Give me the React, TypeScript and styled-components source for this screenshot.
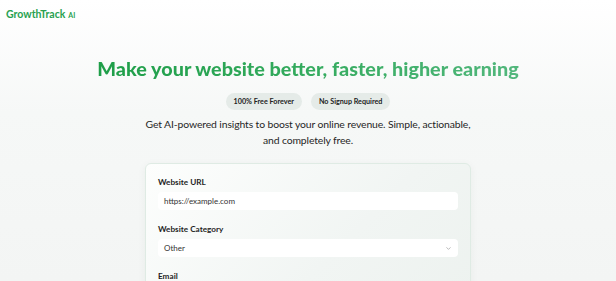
import React from 'react';
import styled, { createGlobalStyle } from 'styled-components';

const GlobalStyle = createGlobalStyle`
  html, body {
    margin: 0;
    padding: 0;
  }
  body {
    font-family: Lato, "Open Sans", sans-serif;
    background: linear-gradient(180deg, #ffffff 0%, #f6f8f7 40%, #f3f5f4 100%);
    min-height: 100vh;
    color: #222;
  }
`;

const Page = styled.div`
  width: 616px;
  height: 281px;
  overflow: hidden;
`;

const Header = styled.header`
  display: flex;
  align-items: baseline;
  padding: 8px 6px 0;
  height: 22px;
`;

const Logo = styled.span`
  font-size: 10.5px;
  font-weight: 700;
  color: #27a150;
`;

const LogoTag = styled.span`
  font-size: 7px;
  font-weight: 700;
  color: #27a150;
  margin-left: 3px;
`;

const Hero = styled.section`
  display: flex;
  flex-direction: column;
  align-items: center;
  padding-top: 26px;
`;

const Title = styled.h1`
  margin: 0;
  font-size: 19.8px;
  font-weight: 900;
  line-height: 24px;
  background: linear-gradient(90deg, #1e9e48 0%, #34ab5e 50%, #52b77c 100%);
  -webkit-background-clip: text;
  background-clip: text;
  color: transparent;
`;

const Badges = styled.div`
  display: flex;
  gap: 9px;
  margin-top: 13px;
`;

const Badge = styled.span`
  display: inline-flex;
  align-items: center;
  height: 17px;
  padding: 0 8px;
  border-radius: 9px;
  background: #e5ebe8;
  font-size: 7.2px;
  font-weight: 700;
  color: #222;
`;

const Subtitle = styled.p`
  margin: 6px 0 0;
  width: 330px;
  text-align: center;
  font-size: 10.4px;
  letter-spacing: -0.12px;
  line-height: 16px;
  color: #262626;
`;

const Card = styled.form`
  margin-top: 15px;
  width: 326px;
  box-sizing: border-box;
  padding: 13px 12px 0;
  border: 1px solid #dfebe4;
  border-radius: 6px;
  background: linear-gradient(135deg, #fdfefd 0%, #f1f5f3 60%, #edf2ef 100%);
  box-shadow: 0 2px 8px rgba(0, 60, 30, 0.05);
  height: 140px;
  display: flex;
  flex-direction: column;
`;

const Field = styled.div`
  display: flex;
  flex-direction: column;
  margin-bottom: 14px;
`;

const Label = styled.label`
  font-size: 8.2px;
  font-weight: 700;
  color: #1f1f1f;
  margin-bottom: 5px;
`;

const Input = styled.div`
  height: 18px;
  display: flex;
  align-items: center;
  justify-content: space-between;
  padding: 0 6px;
  background: #ffffff;
  border-radius: 4px;
  font-size: 8px;
  color: #333;
`;

const Chevron = () => (
  <svg width="7" height="7" viewBox="0 0 24 24" fill="none" stroke="#888" strokeWidth="2" strokeLinecap="round" strokeLinejoin="round">
    <path d="m6 9 6 6 6-6" />
  </svg>
);

export default function App() {
  return (
    <Page>
      <GlobalStyle />
      <Header>
        <Logo>GrowthTrack</Logo>
        <LogoTag>AI</LogoTag>
      </Header>
      <Hero>
        <Title>Make your website better, faster, higher earning</Title>
        <Badges>
          <Badge>100% Free Forever</Badge>
          <Badge>No Signup Required</Badge>
        </Badges>
        <Subtitle>
          Get AI-powered insights to boost your online revenue. Simple, actionable, and completely free.
        </Subtitle>
        <Card>
          <Field>
            <Label>Website URL</Label>
            <Input>https://example.com</Input>
          </Field>
          <Field>
            <Label>Website Category</Label>
            <Input>
              Other
              <Chevron />
            </Input>
          </Field>
          <Field>
            <Label>Email</Label>
          </Field>
        </Card>
      </Hero>
    </Page>
  );
}
